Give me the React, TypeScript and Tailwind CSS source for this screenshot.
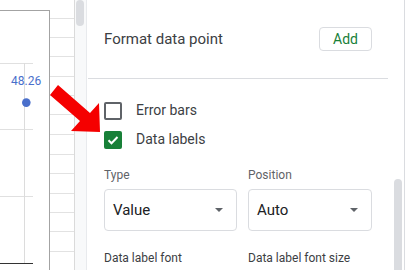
import React from 'react';

const rowHeights = [20, 20, 21, 20, 20, 21, 20, 20, 21, 20, 20, 21, 20];

const Chart = () => (
  <div className="relative mt-[10px] h-[260px] w-[50px] shrink-0 border-t border-r border-[#a3a3a3] bg-white">
    <svg className="absolute left-0 top-0" width="49" height="259" viewBox="0 0 49 259">
      <line x1="0" y1="52.5" x2="33" y2="52.5" stroke="#e0e0e0" />
      <line x1="0" y1="118.5" x2="33" y2="118.5" stroke="#e0e0e0" />
      <line x1="0" y1="185.5" x2="33" y2="185.5" stroke="#e0e0e0" />
      <line x1="24.5" y1="52" x2="24.5" y2="252" stroke="#dcdcdc" />
      <line x1="0" y1="252.5" x2="33" y2="252.5" stroke="#333333" />
      <circle cx="26.3" cy="91.6" r="4.3" fill="#4a6fcb" />
    </svg>
    <span className="absolute left-[11px] top-[63px] text-[12px] leading-[14px] text-[#4a6fcb]">48.26</span>
  </div>
);

const Cells = () => (
  <div className="flex w-[25px] shrink-0 flex-col border-r border-[#dadada] bg-white">
    <div className="h-[19px]" />
    {rowHeights.map((h, i) => (
      <div key={i} className={`border-t border-[#e2e2e2] ${h === 20 ? 'h-[20px]' : 'h-[21px]'}`} />
    ))}
  </div>
);

const Arrow = () => (
  <svg className="absolute left-[48px] top-[84px]" width="54" height="50" viewBox="0 0 54 50">
    <polygon points="10,1 42,29 51,19 52,48 23,47 32,37 2,11" fill="#f50000" />
  </svg>
);

const CheckRow = ({ label, checked }: { label: string; checked: boolean }) => (
  <div className="flex h-[29px] items-center">
    {checked ? (
      <div className="flex h-[18px] w-[18px] items-center justify-center rounded-[2px] bg-[#188038]">
        <svg width="14" height="14" viewBox="0 0 14 14">
          <path d="M2.5 7.2l3 3L11.5 4" fill="none" stroke="#ffffff" strokeWidth="2" />
        </svg>
      </div>
    ) : (
      <div className="h-[18px] w-[18px] rounded-[2px] border-2 border-[#5f6368]" />
    )}
    <span className="ml-[14px] text-[14px] text-[#3c4043]">{label}</span>
  </div>
);

const Select = ({ value, width }: { value: string; width: string }) => (
  <div className={`flex h-[42px] items-center justify-between rounded-[4px] border border-[#dadce0] pl-[8px] pr-[13px] ${width}`}>
    <span className="text-[15px] text-[#202124]">{value}</span>
    <svg width="8" height="4" viewBox="0 0 8 4">
      <polygon points="0,0 8,0 4,4" fill="#5f6368" />
    </svg>
  </div>
);

const Panel = () => (
  <div className="flex w-[329px] shrink-0 bg-white">
    <div className="w-[304px] border-l border-[#e8eaed] pl-[17px] pr-[18px]">
      <div className="flex items-center justify-between pt-[27px]">
        <span className="text-[15px] text-[#3c4043]">Format data point</span>
        <button className="h-[24px] w-[53px] rounded-[4px] border border-[#dadce0] text-[14px] text-[#188038]">
          Add
        </button>
      </div>
      <div className="-ml-[16px] mt-[27px] h-px w-[300px] bg-[#dadce0]" />
      <div className="mt-[17px]">
        <CheckRow label="Error bars" checked={false} />
        <CheckRow label="Data labels" checked />
      </div>
      <div className="mt-[13px] flex gap-[11px]">
        <div className="w-[133px]">
          <div className="text-[12px] leading-[16px] text-[#5f6368]">Type</div>
          <div className="mt-[6px]">
            <Select value="Value" width="w-[133px]" />
          </div>
          <div className="mt-[19px] text-[12px] leading-[16px] text-[#3c4043]">Data label font</div>
        </div>
        <div className="w-[124px]">
          <div className="text-[12px] leading-[16px] text-[#5f6368]">Position</div>
          <div className="mt-[6px]">
            <Select value="Auto" width="w-[124px]" />
          </div>
          <div className="mt-[19px] text-[12px] leading-[16px] text-[#3c4043]">Data label font size</div>
        </div>
      </div>
    </div>
    <div className="w-[14px] pt-[179px] pl-[4px]">
      <div className="h-[100px] w-[8px] rounded-t-full bg-[#dadce0]" />
    </div>
    <div className="w-px bg-[#dadce0]" />
    <div className="flex-1" />
  </div>
);

export default function App() {
  return (
    <div className="relative flex h-[270px] w-[415px] overflow-hidden bg-white font-['Roboto',sans-serif]">
      <Chart />
      <Cells />
      <div className="w-[11px] shrink-0 bg-[#f8f9fa] pl-[1px]">
        <div className="h-[26px] w-[8px] rounded-full bg-[#dadce0]" />
      </div>
      <Panel />
      <Arrow />
    </div>
  );
}
